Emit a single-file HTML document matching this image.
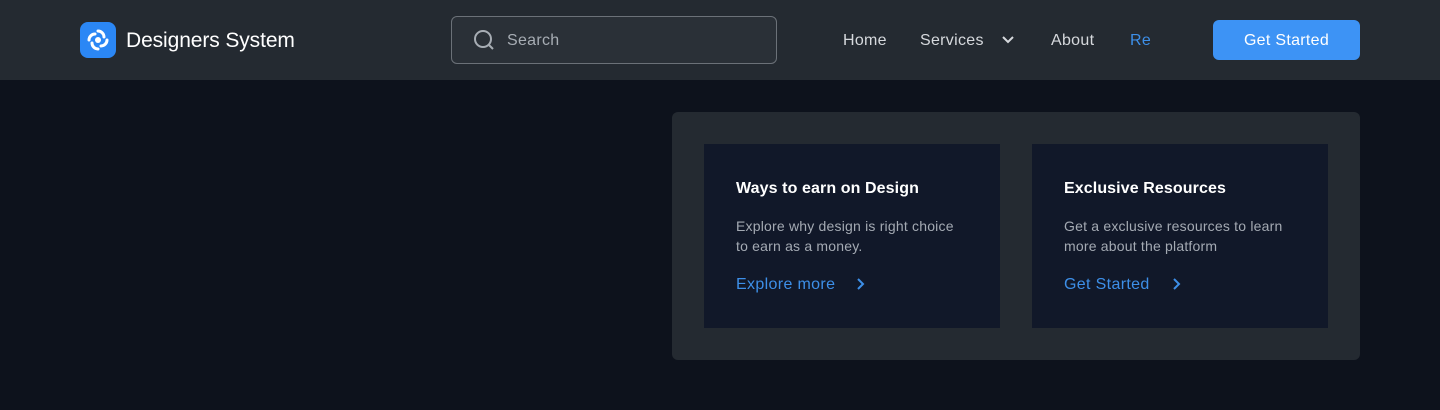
<!DOCTYPE html>
<html><head><style>
*{margin:0;padding:0;box-sizing:border-box}
body{width:1440px;height:410px;background:#0d121c;font-family:"Liberation Sans",sans-serif;position:relative;overflow:hidden}
.nav{position:absolute;left:0;top:0;width:1440px;height:80px;background:#242a31}
.logo{position:absolute;left:80px;top:22px;width:36px;height:36px;border-radius:8px;background:#2b87f5}
.brand{position:absolute;left:126px;top:29px;color:#fff;font-size:21px;letter-spacing:-0.1px}
.search{position:absolute;left:451px;top:16px;width:326px;height:48px;border:1px solid #6b7178;border-radius:6px;background:#2a3037}
.search span{position:absolute;left:55px;top:15px;color:#a7adb4;font-size:16px;letter-spacing:0.3px}
.nl{position:absolute;top:32px;color:#d6d9dd;font-size:16px;letter-spacing:0.3px}
.btn{position:absolute;left:1213px;top:20px;width:147px;height:40px;background:#3d93f5;border-radius:6px;color:#fff;font-size:16px;text-align:center;line-height:41px;letter-spacing:0.3px}
.panel{position:absolute;left:672px;top:112px;width:688px;height:248px;background:#242a31;border-radius:6px}
.card{position:absolute;top:144px;width:296px;height:184px;background:#111829}
.card h3{position:absolute;left:32px;top:36px;color:#fff;font-size:16px;font-weight:bold;letter-spacing:0.1px}
.card p{position:absolute;left:32px;top:72px;color:#a4aab3;font-size:14px;line-height:20px;width:232px;letter-spacing:0.2px}
.card a{position:absolute;left:32px;top:132px;color:#3d8fe8;font-size:16px;letter-spacing:0.35px}
.card svg{position:absolute;top:132px}
</style></head><body>
<div class="nav">
<div class="logo"><svg width="36" height="36" viewBox="0 0 36 36" fill="none" stroke="#fff" stroke-width="3" stroke-linecap="round"><path d="M18 9a6 6 0 0 1 6 6M27 18a6 6 0 0 1-6 6M18 27a6 6 0 0 1-6-6M9 18a6 6 0 0 1 6-6"/><circle cx="18" cy="18" r="3" fill="#fff" stroke="none"/></svg></div>
<div class="brand">Designers System</div>
<div class="search"><svg style="position:absolute;left:20px;top:11px" width="24" height="24" viewBox="0 0 24 24" fill="none" stroke="#a7adb4" stroke-width="2"><circle cx="11" cy="11" r="8"/><path d="M17 17l4 4"/></svg><span>Search</span></div>
<div class="nl" style="left:843px">Home</div>
<div class="nl" style="left:920px">Services</div>
<svg style="position:absolute;left:1000px;top:33px" width="16" height="14" viewBox="0 0 16 14" fill="none" stroke="#d6d9dd" stroke-width="2"><path d="M3 4l5 5 5-5"/></svg>
<div class="nl" style="left:1051px">About</div>
<div class="nl" style="left:1130px;color:#3d8fe8">Re</div>
<div class="btn">Get Started</div>
</div>
<div class="panel"></div>
<div class="card" style="left:704px"><h3>Ways to earn on Design</h3><p>Explore why design is right choice to earn as a money.</p><a>Explore more</a><svg style="left:150px" width="14" height="16" viewBox="0 0 14 16" fill="none" stroke="#3d8fe8" stroke-width="2"><path d="M4 3l5 5-5 5"/></svg></div>
<div class="card" style="left:1032px"><h3>Exclusive Resources</h3><p>Get a exclusive resources to learn more about the platform</p><a>Get Started</a><svg style="left:138px" width="14" height="16" viewBox="0 0 14 16" fill="none" stroke="#3d8fe8" stroke-width="2"><path d="M4 3l5 5-5 5"/></svg></div>
</body></html>
